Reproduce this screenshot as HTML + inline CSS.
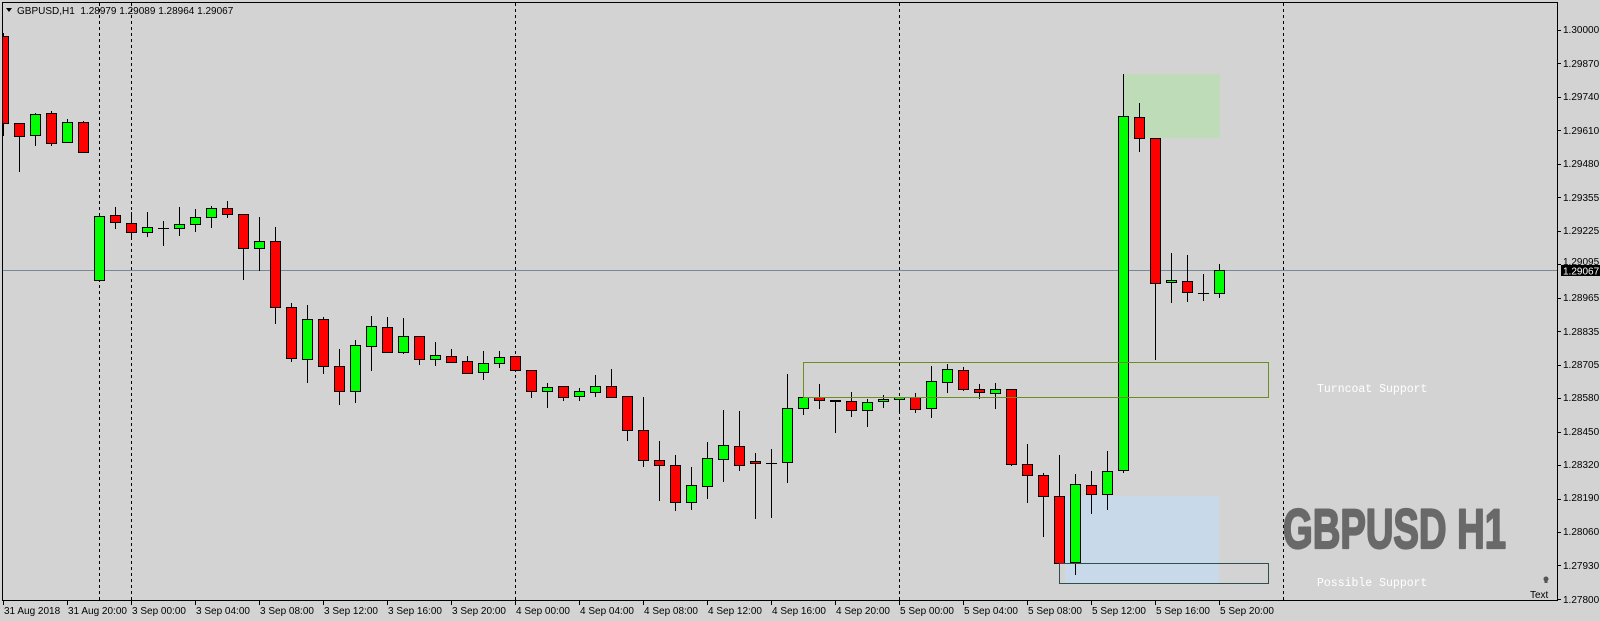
<!DOCTYPE html>
<html><head><meta charset="utf-8">
<style>
html,body{margin:0;padding:0;background:#d3d3d3;width:1600px;height:621px;overflow:hidden}
svg{display:block}
.t{font-family:"Liberation Sans",sans-serif;font-size:10px;fill:#000}
.m{font-family:"Liberation Mono",monospace;font-size:11.5px;fill:#fff}
</style></head>
<body>
<svg id="s" width="1600" height="621" viewBox="0 0 1600 621" xmlns="http://www.w3.org/2000/svg">
<rect x="0" y="0" width="1600" height="621" fill="#d3d3d3"/>
<rect x="1124" y="74" width="96" height="64" fill="#bfdcb8"/>
<rect x="1065" y="496" width="154" height="87" fill="#c8d9ea"/>
<g stroke="#000" stroke-width="1" stroke-dasharray="3,3">
<line x1="99.5" y1="3" x2="99.5" y2="600"/>
<line x1="131.5" y1="3" x2="131.5" y2="600"/>
<line x1="515.5" y1="3" x2="515.5" y2="600"/>
<line x1="899.5" y1="3" x2="899.5" y2="600"/>
<line x1="1283.5" y1="3" x2="1283.5" y2="600"/>
</g>
<line x1="3" y1="270.5" x2="1557" y2="270.5" stroke="#778899" stroke-width="1"/>
<g id="candles"></g>
<rect x="803.5" y="362.5" width="465" height="35" fill="none" stroke="#6b8e23" stroke-width="1"/>
<rect x="1059.5" y="563.5" width="209" height="20" fill="none" stroke="#2f4f4f" stroke-width="1"/>
<text class="m" x="1317" y="392">Turncoat Support</text>
<text class="m" x="1317" y="586">Possible Support</text>
<text x="1283" y="548" textLength="223" lengthAdjust="spacingAndGlyphs" font-family="'Liberation Sans Narrow','Liberation Sans',sans-serif" font-weight="bold" font-size="56" fill="#696969" stroke="#696969" stroke-width="2.2" stroke-linejoin="round">GBPUSD H1</text>
<circle cx="1546" cy="579" r="2.5" fill="#555"/>
<rect x="1544.5" y="581" width="3" height="2" fill="#555"/>
<text class="t" x="1530" y="598" font-size="13">Text</text>
<rect x="2.5" y="2.5" width="1555" height="598" fill="none" stroke="#000" stroke-width="1"/>
<polygon points="6,8 12,8 9,12" fill="#000"/>
<text class="t" x="17" y="14" font-size="10.5">GBPUSD,H1&#160; 1.28979 1.29089 1.28964 1.29067</text>
<g id="axes"></g>
<g>
<text x="1563" y="33" class="t" font-size="9.5">1.30000</text>
<text x="1563" y="67" class="t" font-size="9.5">1.29870</text>
<text x="1563" y="100" class="t" font-size="9.5">1.29740</text>
<text x="1563" y="134" class="t" font-size="9.5">1.29610</text>
<text x="1563" y="167" class="t" font-size="9.5">1.29480</text>
<text x="1563" y="201" class="t" font-size="9.5">1.29355</text>
<text x="1563" y="234" class="t" font-size="9.5">1.29225</text>
<text x="1563" y="265" class="t" font-size="9.5">1.29095</text>
<text x="1563" y="301" class="t" font-size="9.5">1.28965</text>
<text x="1563" y="335" class="t" font-size="9.5">1.28835</text>
<text x="1563" y="368" class="t" font-size="9.5">1.28705</text>
<text x="1563" y="401" class="t" font-size="9.5">1.28580</text>
<text x="1563" y="435" class="t" font-size="9.5">1.28450</text>
<text x="1563" y="468" class="t" font-size="9.5">1.28320</text>
<text x="1563" y="501" class="t" font-size="9.5">1.28190</text>
<text x="1563" y="535" class="t" font-size="9.5">1.28060</text>
<text x="1563" y="569" class="t" font-size="9.5">1.27930</text>
<text x="1563" y="603" class="t" font-size="9.5">1.27800</text>
</g>
<rect x="1561" y="265" width="39" height="11" fill="#000"/>
<text x="1563" y="274.5" class="t" style="fill:#fff" font-size="9.5">1.29067</text>
<g>
<text class="t" x="4" y="614">31 Aug 2018</text>
<text class="t" x="68" y="614">31 Aug 20:00</text>
<text class="t" x="132" y="614">3 Sep 00:00</text>
<text class="t" x="196" y="614">3 Sep 04:00</text>
<text class="t" x="260" y="614">3 Sep 08:00</text>
<text class="t" x="324" y="614">3 Sep 12:00</text>
<text class="t" x="388" y="614">3 Sep 16:00</text>
<text class="t" x="452" y="614">3 Sep 20:00</text>
<text class="t" x="516" y="614">4 Sep 00:00</text>
<text class="t" x="580" y="614">4 Sep 04:00</text>
<text class="t" x="644" y="614">4 Sep 08:00</text>
<text class="t" x="708" y="614">4 Sep 12:00</text>
<text class="t" x="772" y="614">4 Sep 16:00</text>
<text class="t" x="836" y="614">4 Sep 20:00</text>
<text class="t" x="900" y="614">5 Sep 00:00</text>
<text class="t" x="964" y="614">5 Sep 04:00</text>
<text class="t" x="1028" y="614">5 Sep 08:00</text>
<text class="t" x="1092" y="614">5 Sep 12:00</text>
<text class="t" x="1156" y="614">5 Sep 16:00</text>
<text class="t" x="1220" y="614">5 Sep 20:00</text>
</g>
</svg>
<script>
var C=[
['R',36,123,33,136],['R',123,136,123,172],['G',114,135,113,146],['R',113,143,111,146],['G',122,142,119,143],['R',122,152,121,152],
['G',216,280,216,282],['R',215,222,207,229],['R',223,232,212,238],['G',227,232,212,237],['X',228,228,221,246],['G',224,228,207,236],
['G',217,224,209,232],['G',208,217,206,228],['R',208,214,201,218],['R',214,248,214,280],['G',241,248,217,271],['R',241,307,227,324],
['R',307,358,303,362],['G',319,359,305,383],['R',319,366,317,374],['R',366,391,349,405],['G',345,391,340,403],['G',326,346,316,371],
['R',327,352,317,353],['G',336,352,318,354],['R',336,359,336,365],['G',355,359,342,366],['R',356,362,349,363],['R',361,373,356,373],
['G',363,372,351,380],['G',357,363,351,368],['R',356,370,356,370],['R',370,391,370,398],['G',387,391,383,408],['R',386,397,386,401],
['G',391,396,388,401],['G',386,392,375,397],['R',386,397,369,397],['R',396,430,396,441],['R',430,460,397,467],['R',460,465,441,501],
['R',465,502,455,511],['G',485,502,467,510],['G',458,486,442,499],['G',445,459,410,482],['R',446,465,411,471],['R',461,463,453,519],
['X',463,463,449,518],['G',408,462,374,483],['G',397,408,397,415],['R',397,400,384,409],['X',400,401,400,433],['R',401,410,392,417],
['G',402,410,399,427],['G',399,401,395,408],['G',397,399,397,413],['R',397,409,393,413],['G',381,408,366,418],['G',369,382,364,393],
['R',370,389,367,391],['R',389,392,384,399],['G',389,393,383,409],['R',389,464,389,466],['R',464,475,444,503],['R',475,496,473,537],
['R',496,563,455,563],['G',484,562,474,575],['R',485,494,471,514],['G',471,494,451,510],['G',116,470,74,473],['R',117,138,103,152],
['R',138,283,138,360],['G',280,282,253,303],['R',281,292,255,302],['X',293,293,274,301],['G',270,293,264,298]];
var g=document.getElementById('candles'),h='';
for(var k=0;k<C.length;k++){var c=C[k],x=3+16*k;
h+='<line x1="'+(x+.5)+'" y1="'+c[3]+'" x2="'+(x+.5)+'" y2="'+c[4]+'" stroke="#000"/>';
if(c[0]=='X'){h+='<rect x="'+(x-5)+'" y="'+c[1]+'" width="11" height="'+Math.max(1,c[2]-c[1]+1)+'" fill="#000"/>';}
else{var hh=Math.max(2,c[2]-c[1]);h+='<rect x="'+(x-4.5)+'" y="'+(c[1]+.5)+'" width="10" height="'+hh+'" fill="'+(c[0]=='G'?'#00ff00':'#ff0000')+'" stroke="#000" stroke-width="1"/>';}
}
g.innerHTML=h;
var a='';
for(var i=0;i<18;i++){var y=Math.round(29.8+i*33.48)+.5;a+='<line x1="1557" y1="'+y+'" x2="1561" y2="'+y+'" stroke="#000"/>';}
for(var j=0;j<20;j++){var xx=3+64*j+.5;a+='<line x1="'+xx+'" y1="600" x2="'+xx+'" y2="605" stroke="#000"/>';}
document.getElementById('axes').innerHTML=a;
document.querySelector('svg').insertAdjacentHTML('beforeend','<rect x="0" y="0" width="2" height="621" fill="#d3d3d3"/>');
</script>
</body></html>
